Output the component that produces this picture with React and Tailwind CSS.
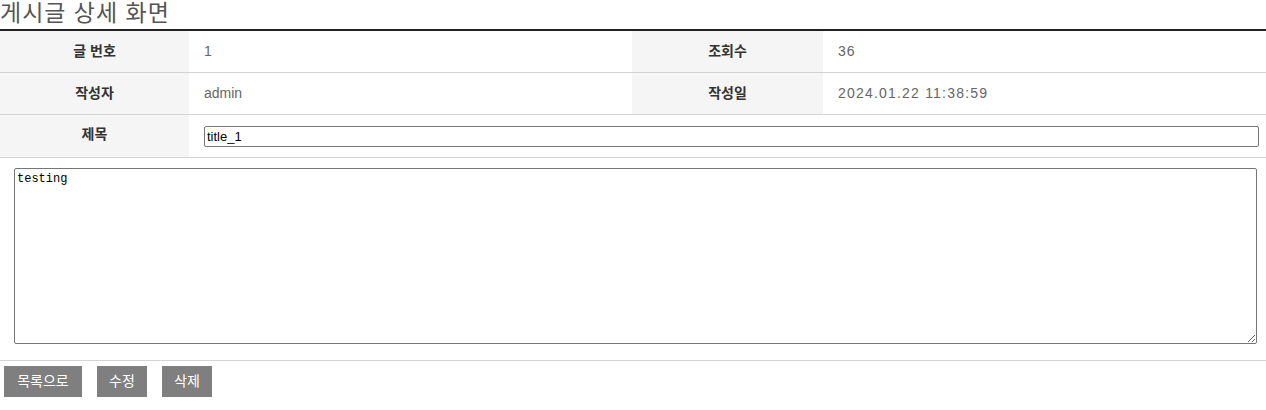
import { useState } from "react";

const ko = { fontFamily: '"Liberation Sans", "Noto Sans CJK KR", sans-serif' };

const Label = ({ children }) => (
  <div className="flex items-center justify-center bg-[#f5f5f5] text-[14px] font-bold text-[#333]">
    {children}
  </div>
);

const Value = ({ children, className = "" }) => (
  <div className={`flex items-center pl-[15px] text-[14px] text-[#666] ${className}`}>
    {children}
  </div>
);

const buttons = [
  { label: "목록으로", width: "w-[78px]" },
  { label: "수정", width: "w-[50px]" },
  { label: "삭제", width: "w-[50px]" },
];

export default function App() {
  const [title, setTitle] = useState("title_1");
  const [content, setContent] = useState("testing");

  return (
    <div className="w-[1266px] bg-white" style={ko}>
      <h2 className="h-[29px] text-[23px] leading-[26px] tracking-[1px] text-[#555]">게시글 상세 화면</h2>

      {/* Detail table */}
      <div className="border-t-2 border-[#222]">
        <div className="grid h-[42px] grid-cols-[189px_443px_191px_443px] border-b border-[#d4d4d4]">
          <Label>글 번호</Label>
          <Value className="tracking-[0.5px]">1</Value>
          <Label>조회수</Label>
          <Value className="tracking-[1px]">36</Value>
        </div>
        <div className="grid h-[42px] grid-cols-[189px_443px_191px_443px] border-b border-[#d4d4d4]">
          <Label>작성자</Label>
          <Value>admin</Value>
          <Label>작성일</Label>
          <Value className="tracking-[1.2px]">2024.01.22 11:38:59</Value>
        </div>
        <div className="grid h-[43px] grid-cols-[189px_1077px] border-b border-[#d4d4d4]">
          <div className="flex justify-center bg-[#f5f5f5] pt-[9px] text-[14px] font-bold text-[#333]">제목</div>
          <div className="flex items-center pl-[15px] pr-[7px]">
            <input
              type="text"
              value={title}
              onChange={(e) => setTitle(e.target.value)}
              className="h-[21px] w-full rounded-[2px] border border-[#767676] px-[2px] text-[13px] text-black outline-none"
            />
          </div>
        </div>

        {/* Content */}
        <div className="h-[203px] border-b border-[#d4d4d4] pl-[14px] pr-[9px] pt-[10px]">
          <textarea
            value={content}
            onChange={(e) => setContent(e.target.value)}
            className="block h-[176px] w-full rounded-[2px] border border-[#767676] px-[2px] py-[1px] text-[12px] text-black outline-none"
            style={{ fontFamily: '"Liberation Mono", monospace' }}
          />
        </div>
      </div>

      {/* Buttons */}
      <div className="flex gap-[15px] pl-[4px] pt-[5px]">
        {buttons.map((b) => (
          <button
            key={b.label}
            className={`h-[31px] ${b.width} bg-[#7f7f7f] text-[14px] text-white`}
          >
            {b.label}
          </button>
        ))}
      </div>
    </div>
  );
}
